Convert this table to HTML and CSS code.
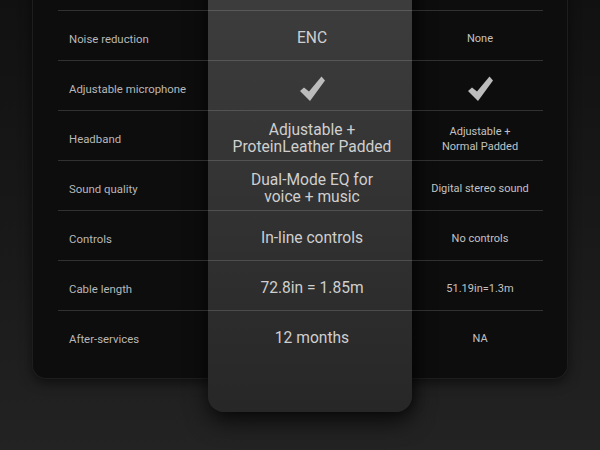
FILE: index.html
```html
<!DOCTYPE html>
<html lang="en">
<head>
    <meta charset="UTF-8">
    <meta name="viewport" content="width=device-width, initial-scale=1.0">
    <title>Headset Comparison</title>

    <link rel="stylesheet" href="styles.css">
</head>
<body>
    <div class="page">
        <div class="compare">
            <!-- Highlighted column for our product -->
            <div class="highlight"></div>

            <div class="row">
                <div class="label">Noise reduction</div>
                <div class="ours">ENC</div>
                <div class="theirs">None</div>
            </div>
            <div class="row">
                <div class="label">Adjustable microphone</div>
                <div class="ours">
                    <svg class="check" viewBox="0 0 28 28"><path d="M2 16 L6 12.5 L11 16.5 L23.5 1.5 L27 5.5 L12 26 Z"/></svg>
                </div>
                <div class="theirs">
                    <svg class="check" viewBox="0 0 28 28"><path d="M2 16 L6 12.5 L11 16.5 L23.5 1.5 L27 5.5 L12 26 Z"/></svg>
                </div>
            </div>
            <div class="row">
                <div class="label">Headband</div>
                <div class="ours">Adjustable +<br>ProteinLeather Padded</div>
                <div class="theirs">Adjustable +<br>Normal Padded</div>
            </div>
            <div class="row">
                <div class="label">Sound quality</div>
                <div class="ours">Dual-Mode EQ for<br>voice + music</div>
                <div class="theirs">Digital stereo sound</div>
            </div>
            <div class="row">
                <div class="label">Controls</div>
                <div class="ours">In-line controls</div>
                <div class="theirs">No controls</div>
            </div>
            <div class="row">
                <div class="label">Cable length</div>
                <div class="ours">72.8in = 1.85m</div>
                <div class="theirs">51.19in=1.3m</div>
            </div>
            <div class="row">
                <div class="label">After-services</div>
                <div class="ours">12 months</div>
                <div class="theirs">NA</div>
            </div>
        </div>
    </div>
</body>
</html>
```

FILE: styles.css
```css
html, body {
    margin: 0;
    height: 100%;
    font-family: Roboto, "Liberation Sans", Arial, sans-serif;
    background: #1a1a1a;
}

.page {
    height: 450px;
    overflow: hidden;
    background: linear-gradient(to bottom, #111 0%, #1a1a1a 60%, #232323 100%);
}

/* Dark comparison card */
.compare {
    position: relative;
    margin: -30px 32px 0;
    padding: 40px 24px 18px 25px;
    background: #0d0d0d;
    border: 1px solid #1e1e1e;
    border-top: none;
    border-radius: 0 0 14px 14px;
    box-shadow: 0 4px 12px rgba(0,0,0,0.5);
}

.highlight {
    position: absolute;
    top: 0;
    bottom: -34px;
    left: 175px;
    width: 204px;
    border-radius: 0 0 16px 16px;
    background: linear-gradient(to bottom, #3e3e3e 0%, #343434 45%, #272727 100%);
    box-shadow: 0 10px 22px rgba(0,0,0,0.65), 4px 0 10px rgba(0,0,0,0.35);
}

.row {
    position: relative;
    display: grid;
    grid-template-columns: 151px 204px 1fr;
    align-items: center;
    height: 50px;
    padding-top: 6px;
    box-sizing: border-box;
    border-top: 1px solid rgba(255,255,255,0.15);
}

.label {
    padding-left: 11px;
    font-size: 11.4px;
    color: #b8b8b8;
}

.ours {
    text-align: center;
    font-size: 15.6px;
    line-height: 17px;
    color: #cfcfcf;
    padding-left: 2px;
}

.theirs {
    text-align: center;
    font-size: 11px;
    line-height: 15px;
    color: #c2c2c2;
    padding-left: 4px;
}

.check {
    width: 28px;
    height: 28px;
    fill: #bcbcbc;
    display: block;
    margin: 0 auto;
}
```
